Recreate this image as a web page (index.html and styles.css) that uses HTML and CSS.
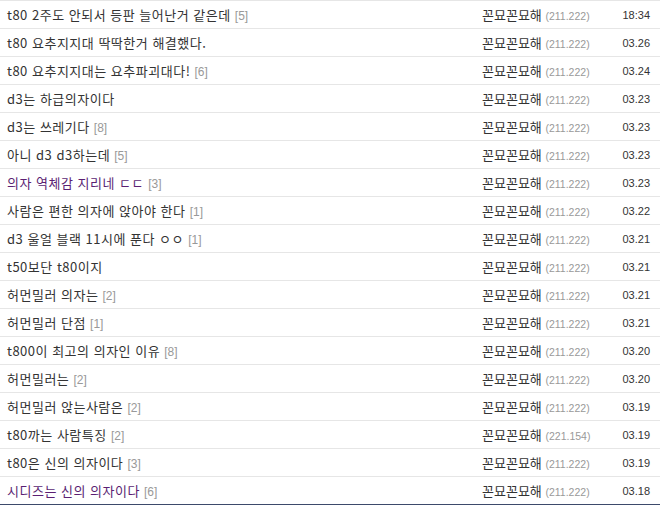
FILE: index.html
```html
<!DOCTYPE html>
<html lang="ko">
<head>
    <meta charset="UTF-8">
    <title>게시판 목록</title>
    <link rel="stylesheet" href="styles.css">
</head>
<body>
    <ul class="post-list">
        <li class="post-row">
            <span class="post-title">t80 2주도 안되서 등판 늘어난거 같은데 <em class="reply-count">[5]</em></span>
            <span class="post-writer">꼰묘꼰묘해 <em class="ip">(211.222)</em></span>
            <span class="post-date">18:34</span>
        </li>
        <li class="post-row">
            <span class="post-title">t80 요추지지대 딱딱한거 해결했다.</span>
            <span class="post-writer">꼰묘꼰묘해 <em class="ip">(211.222)</em></span>
            <span class="post-date">03.26</span>
        </li>
        <li class="post-row">
            <span class="post-title">t80 요추지지대는 요추파괴대다! <em class="reply-count">[6]</em></span>
            <span class="post-writer">꼰묘꼰묘해 <em class="ip">(211.222)</em></span>
            <span class="post-date">03.24</span>
        </li>
        <li class="post-row">
            <span class="post-title">d3는 하급의자이다</span>
            <span class="post-writer">꼰묘꼰묘해 <em class="ip">(211.222)</em></span>
            <span class="post-date">03.23</span>
        </li>
        <li class="post-row">
            <span class="post-title">d3는 쓰레기다 <em class="reply-count">[8]</em></span>
            <span class="post-writer">꼰묘꼰묘해 <em class="ip">(211.222)</em></span>
            <span class="post-date">03.23</span>
        </li>
        <li class="post-row">
            <span class="post-title">아니 d3 d3하는데 <em class="reply-count">[5]</em></span>
            <span class="post-writer">꼰묘꼰묘해 <em class="ip">(211.222)</em></span>
            <span class="post-date">03.23</span>
        </li>
        <li class="post-row">
            <span class="post-title visited">의자 역체감 지리네 ㄷㄷ <em class="reply-count">[3]</em></span>
            <span class="post-writer">꼰묘꼰묘해 <em class="ip">(211.222)</em></span>
            <span class="post-date">03.23</span>
        </li>
        <li class="post-row">
            <span class="post-title">사람은 편한 의자에 앉아야 한다 <em class="reply-count">[1]</em></span>
            <span class="post-writer">꼰묘꼰묘해 <em class="ip">(211.222)</em></span>
            <span class="post-date">03.22</span>
        </li>
        <li class="post-row">
            <span class="post-title">d3 울얼 블랙 11시에 푼다 ㅇㅇ <em class="reply-count">[1]</em></span>
            <span class="post-writer">꼰묘꼰묘해 <em class="ip">(211.222)</em></span>
            <span class="post-date">03.21</span>
        </li>
        <li class="post-row">
            <span class="post-title">t50보단 t80이지</span>
            <span class="post-writer">꼰묘꼰묘해 <em class="ip">(211.222)</em></span>
            <span class="post-date">03.21</span>
        </li>
        <li class="post-row">
            <span class="post-title">허먼밀러 의자는 <em class="reply-count">[2]</em></span>
            <span class="post-writer">꼰묘꼰묘해 <em class="ip">(211.222)</em></span>
            <span class="post-date">03.21</span>
        </li>
        <li class="post-row">
            <span class="post-title">허먼밀러 단점 <em class="reply-count">[1]</em></span>
            <span class="post-writer">꼰묘꼰묘해 <em class="ip">(211.222)</em></span>
            <span class="post-date">03.21</span>
        </li>
        <li class="post-row">
            <span class="post-title">t800이 최고의 의자인 이유 <em class="reply-count">[8]</em></span>
            <span class="post-writer">꼰묘꼰묘해 <em class="ip">(211.222)</em></span>
            <span class="post-date">03.20</span>
        </li>
        <li class="post-row">
            <span class="post-title">허먼밀러는 <em class="reply-count">[2]</em></span>
            <span class="post-writer">꼰묘꼰묘해 <em class="ip">(211.222)</em></span>
            <span class="post-date">03.20</span>
        </li>
        <li class="post-row">
            <span class="post-title">허먼밀러 앉는사람은 <em class="reply-count">[2]</em></span>
            <span class="post-writer">꼰묘꼰묘해 <em class="ip">(211.222)</em></span>
            <span class="post-date">03.19</span>
        </li>
        <li class="post-row">
            <span class="post-title">t80까는 사람특징 <em class="reply-count">[2]</em></span>
            <span class="post-writer">꼰묘꼰묘해 <em class="ip">(221.154)</em></span>
            <span class="post-date">03.19</span>
        </li>
        <li class="post-row">
            <span class="post-title">t80은 신의 의자이다 <em class="reply-count">[3]</em></span>
            <span class="post-writer">꼰묘꼰묘해 <em class="ip">(211.222)</em></span>
            <span class="post-date">03.19</span>
        </li>
        <li class="post-row">
            <span class="post-title visited">시디즈는 신의 의자이다 <em class="reply-count">[6]</em></span>
            <span class="post-writer">꼰묘꼰묘해 <em class="ip">(211.222)</em></span>
            <span class="post-date">03.18</span>
        </li>
    </ul>
</body>
</html>
```

FILE: styles.css
```css
body {
    margin: 0;
    padding: 0;
    background-color: #fff;
    color: #333;
    font-family: 'Noto Sans CJK KR', 'Noto Sans', sans-serif;
}

.post-list {
    list-style: none;
    margin: 0;
    padding: 0;
    border-top: 1px solid #e6e6e6;
}

.post-row {
    display: flex;
    align-items: center;
    height: 27px;
    border-bottom: 1px solid #e6e6e6;
}

.post-row:last-child {
    border-bottom-color: #3d4a6b; /* dark navy line under the list */
}

.post-title {
    flex: 1;
    padding-left: 7px;
    font-size: 13px;
    letter-spacing: 0.5px;
    color: #333;
    white-space: nowrap;
}

.post-title.visited {
    color: #5b1f73;
}

.reply-count {
    font-style: normal;
    font-family: 'Liberation Sans', sans-serif;
    font-size: 12px;
    letter-spacing: 0;
    color: #999;
}

.post-writer {
    width: 120px;
    font-size: 13px;
    color: #333;
    white-space: nowrap;
}

.ip {
    font-style: normal;
    font-family: 'Liberation Sans', sans-serif;
    font-size: 10.5px;
    color: #999;
}

.post-date {
    width: 48px;
    padding-right: 10px;
    text-align: right;
    font-family: 'Liberation Sans', sans-serif;
    font-size: 11px;
    color: #333;
}
```
